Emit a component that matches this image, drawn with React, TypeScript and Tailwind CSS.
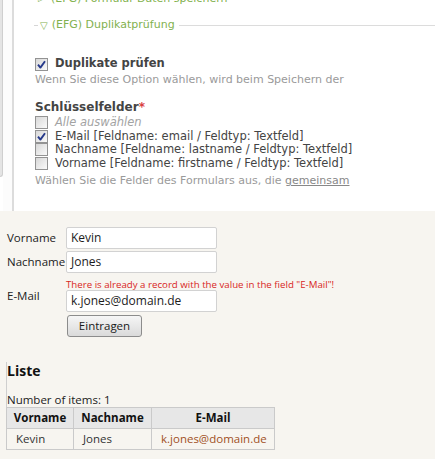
import React from 'react'

// ░▒▓ small checkbox, drawn like the old XP-style box ▓▒░
function Box({ checked }: { checked?: boolean }) {
  return (
    <span className="w-[13px] h-[13px] shrink-0 border border-[#939393] bg-linear-to-br from-[#d8d8d8] to-[#fafafa] flex items-center justify-center">
      {checked && (
        <svg width="11" height="11" viewBox="0 0 11 11">
          <path d="M2 5.6 L4.4 8.6 L9 2.2" fill="none" stroke="#26398a" strokeWidth="1.9" strokeLinejoin="round" />
        </svg>
      )}
    </span>
  )
}

const KEY_FIELDS = [
  { label: 'E-Mail [Feldname: email / Feldtyp: Textfeld]', checked: true },
  { label: 'Nachname [Feldname: lastname / Feldtyp: Textfeld]', checked: false },
  { label: 'Vorname [Feldname: firstname / Feldtyp: Textfeld]', checked: false },
]

function BackendPanel() {
  return (
    <div className="h-[211px] bg-white flex overflow-hidden font-['DejaVu_Sans',Verdana,sans-serif]">
      {/* left gutter: edge of the neighbouring box + divider */}
      <div className="w-[3px] h-[177px] bg-[#e4e4e4] border-r border-b border-[#cfcfcf] rounded-br-[3px] shrink-0" />
      <div className="w-[9px] bg-[#fcfcfc] shrink-0" />
      <div className="w-[2px] bg-[#dcdcdc] shrink-0" />

      <div className="flex-1 pl-[20px]">
        <div className="h-[13px] -mt-[8px] leading-[13px] text-[11px] text-[#82b14e] flex items-center whitespace-nowrap">
          <span className="ml-[4px] text-[9px]">▷</span>
          <span className="ml-[6px]">(EFG) Formular-Daten speichern</span>
        </div>

        <div className="h-[14px] mt-[13px] flex items-center text-[11px] text-[#82b14e] whitespace-nowrap">
          <div className="w-[4px] h-px bg-[#d6d6d6]" />
          <span className="ml-[2px] text-[10px]">▽</span>
          <span className="ml-[4px]">(EFG) Duplikatprüfung</span>
          <div className="flex-1 h-px bg-[#dcdcdc] ml-[4px]" />
        </div>

        <div className="h-[14px] mt-[25px] pl-px flex items-center gap-[7px]">
          <Box checked />
          <span className="text-[11.5px] font-bold text-[#444]">Duplikate prüfen</span>
        </div>
        <div className="h-[14px] mt-[2px] pl-px leading-[14px] text-[11px] text-[#9a9a9a] whitespace-nowrap">
          Wenn Sie diese Option wählen, wird beim Speichern der
        </div>

        <div className="h-[15px] mt-[13px] pl-px leading-[15px] text-[12px] font-bold text-[#444]">
          Schlüsselfelder<span className="text-[#d94040]">*</span>
        </div>
        <div className="mt-[1px] pl-px text-[11.5px]">
          <div className="h-[13.5px] flex items-center gap-[7px]">
            <Box />
            <span className="italic text-[#a3a3a3]">Alle auswählen</span>
          </div>
          {KEY_FIELDS.map(f => (
            <div key={f.label} className="h-[13.5px] flex items-center gap-[7px] whitespace-nowrap">
              <Box checked={f.checked} />
              <span className="text-[#444]">{f.label}</span>
            </div>
          ))}
        </div>
        <div className="h-[14px] mt-[4px] pl-px leading-[14px] text-[11px] text-[#9a9a9a] whitespace-nowrap">
          Wählen Sie die Felder des Formulars aus, die <span className="underline text-[#888]">gemeinsam</span>
        </div>
      </div>
    </div>
  )
}

function Field({ label, value, error }: { label: string; value: string; error?: string }) {
  return (
    <div className="flex items-center">
      <span className="w-[59px] text-[11.5px] text-[#222]">{label}</span>
      <div className="flex flex-col">
        {error && <span className="h-[11px] leading-[11px] text-[9.7px] text-[#d8261e] whitespace-nowrap">{error}</span>}
        <div className="w-[151px] h-[22px] bg-white border border-[#d2d2d2] rounded-[2px] px-[4px] flex items-center text-[12px] text-[#1c1c1c]">
          {value}
        </div>
      </div>
    </div>
  )
}

function FrontendForm() {
  return (
    <div className="h-[248px] bg-[#f7f5f0] pl-[7px] pt-[16px] font-['Open_Sans',sans-serif]">
      <div className="flex flex-col gap-[2px]">
        <Field label="Vorname" value="Kevin" />
        <Field label="Nachname" value="Jones" />
      </div>
      <div className="mt-[6px]">
        <Field label="E-Mail" value="k.jones@domain.de" error={'There is already a record with the value in the field "E-Mail"!'} />
      </div>
      <button className="mt-[3px] ml-[60px] w-[75px] h-[22px] rounded-[3px] border border-[#8c8c8c] bg-linear-to-b from-[#f6f6f6] to-[#dadada] text-[11.5px] text-[#1a1a1a]">
        Eintragen
      </button>

      {/* ░▒▓ LISTE ▓▒░ */}
      <div className="mt-[25px] -ml-px border-l border-[#cfcfcf]">
        <div className="h-[18px] mt-[2px] leading-[18px] text-[14px] font-bold text-[#111]">Liste</div>
        <div className="h-[14px] mt-[13px] leading-[14px] text-[11.5px] text-[#222]">Number of items: 1</div>
        <table className="-ml-px border-collapse text-[11.5px]">
          <thead>
            <tr className="bg-[#e7e7e7] h-[21px]">
              <th className="w-[67px] border border-[#cacaca] font-bold text-[#111] text-center p-0">Vorname</th>
              <th className="w-[78px] border border-[#cacaca] font-bold text-[#111] text-center p-0">Nachname</th>
              <th className="w-[123px] border border-[#cacaca] font-bold text-[#111] text-center p-0">E-Mail</th>
            </tr>
          </thead>
          <tbody>
            <tr className="h-[21px]">
              <td className="border border-[#cacaca] pl-[9px] py-0 text-[#333]">Kevin</td>
              <td className="border border-[#cacaca] pl-[9px] py-0 text-[#333]">Jones</td>
              <td className="border border-[#cacaca] pl-[9px] py-0 text-[#a1501d]">k.jones@domain.de</td>
            </tr>
          </tbody>
        </table>
      </div>
    </div>
  )
}

export default function App() {
  return (
    <div className="w-[435px] h-[459px] overflow-hidden">
      <BackendPanel />
      <FrontendForm />
    </div>
  )
}
